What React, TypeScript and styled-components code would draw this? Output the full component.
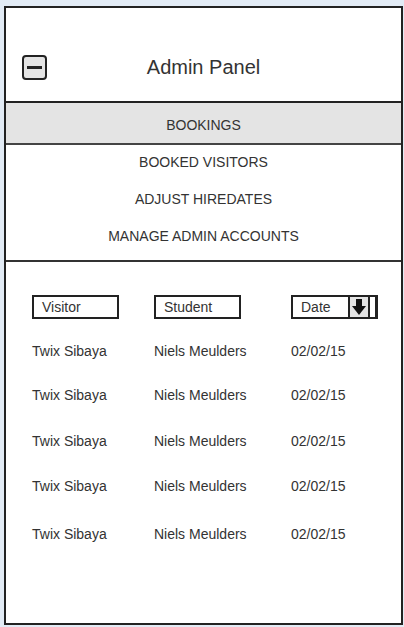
import styled, { createGlobalStyle } from 'styled-components'

const GlobalStyle = createGlobalStyle`
  html, body {
    margin: 0;
    padding: 0;
    background: #e2ebf5;
  }
  body {
    font-family: "Liberation Sans", Arial, sans-serif;
    color: #333;
  }
`

const Frame = styled.div`
  box-sizing: border-box;
  width: 399px;
  height: 619px;
  margin: 6px 0 0 4px;
  border: 2px solid #222;
  background: white;
  display: flex;
  flex-direction: column;
`

const Header = styled.header`
  height: 67px;
  padding: 26px 0 0 16px;
  border-bottom: 2px solid #222;
  display: grid;
  grid-template-columns: 1fr auto 1fr;
  align-items: center;
`

const MenuButton = styled.div`
  box-sizing: border-box;
  width: 25px;
  height: 25px;
  border: 2px solid #222;
  border-radius: 4px;
  background: #e4e4e4;
  display: flex;
  align-items: center;
  justify-content: center;

  &::after {
    content: '';
    width: 15px;
    height: 3px;
    background: #222;
  }
`

const Title = styled.h1`
  margin: 0 0 0 -16px;
  font-size: 20px;
  font-weight: normal;
  color: #333;
`

const Nav = styled.nav`
  display: flex;
  flex-direction: column;
  border-bottom: 2px solid #333;
  padding-bottom: 4px;
`

const NavItem = styled.div<{ $active?: boolean }>`
  box-sizing: border-box;
  height: ${p => (p.$active ? '42px' : '37px')};
  display: flex;
  align-items: center;
  justify-content: center;
  font-size: 14px;
  color: #333;
  text-transform: uppercase;
  background: ${p => (p.$active ? '#e4e4e4' : 'transparent')};
  border-bottom: ${p => (p.$active ? '2px solid #444' : 'none')};
  padding: ${p => (p.$active ? '3px 0 0' : '0 0 4px')};
`

const Table = styled.div`
  padding: 33px 0 0 26px;
`

const Row = styled.div<{ $gap?: number }>`
  display: grid;
  grid-template-columns: 122px 137px 100px;
  align-items: center;
  height: 20px;
  margin-top: ${p => p.$gap ?? 24}px;
  font-size: 14px;
  color: #333;
`

const HeadRow = styled(Row)`
  height: 24px;
  margin-top: 0;
`

const HeadBox = styled.div`
  box-sizing: border-box;
  width: 87px;
  height: 24px;
  border: 2px solid #222;
  padding-left: 8px;
  display: flex;
  align-items: center;
  font-size: 14px;
`

const SelectBox = styled(HeadBox)`
  justify-content: space-between;
  padding-right: 5px;
  border-right-width: 3px;
`

const SortButton = styled.div`
  box-sizing: border-box;
  width: 22px;
  height: 20px;
  background: #e4e4e4;
  border-left: 2px solid #222;
  border-right: 2px solid #222;
  display: flex;
  align-items: center;
  justify-content: center;
`

const bookings = [
  { visitor: 'Twix Sibaya', student: 'Niels Meulders', date: '02/02/15', gap: 22 },
  { visitor: 'Twix Sibaya', student: 'Niels Meulders', date: '02/02/15', gap: 24 },
  { visitor: 'Twix Sibaya', student: 'Niels Meulders', date: '02/02/15', gap: 26 },
  { visitor: 'Twix Sibaya', student: 'Niels Meulders', date: '02/02/15', gap: 25 },
  { visitor: 'Twix Sibaya', student: 'Niels Meulders', date: '02/02/15', gap: 28 },
]

export default function App() {
  return (
    <>
      <GlobalStyle />
      <Frame>
        <Header>
          <MenuButton />
          <Title>Admin Panel</Title>
          <span />
        </Header>
        <Nav>
          <NavItem $active>Bookings</NavItem>
          <NavItem>Booked Visitors</NavItem>
          <NavItem>Adjust Hiredates</NavItem>
          <NavItem>Manage Admin Accounts</NavItem>
        </Nav>
        <Table>
          <HeadRow>
            <HeadBox>Visitor</HeadBox>
            <HeadBox>Student</HeadBox>
            <SelectBox>
              Date
              <SortButton>
                <svg width="14" height="16" viewBox="0 0 14 16">
                  <rect x="4" y="0" width="6" height="8" fill="#111" />
                  <polygon points="0,7 14,7 7,16" fill="#111" />
                </svg>
              </SortButton>
            </SelectBox>
          </HeadRow>
          {bookings.map((b, i) => (
            <Row key={i} $gap={b.gap}>
              <span>{b.visitor}</span>
              <span>{b.student}</span>
              <span>{b.date}</span>
            </Row>
          ))}
        </Table>
      </Frame>
    </>
  )
}
